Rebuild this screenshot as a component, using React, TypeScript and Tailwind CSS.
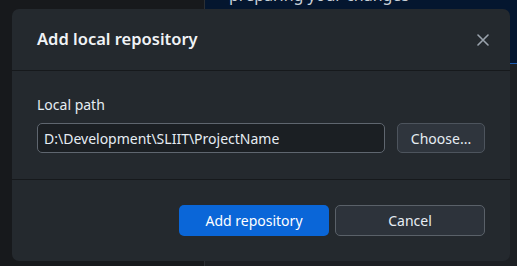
export default function App() {
  return (
    <div className="relative h-[266px] w-[517px] overflow-hidden bg-[#16181b] font-['Segoe_UI','Noto_Sans',sans-serif]">
      {/* app behind the modal */}
      <div className="flex h-full">
        <div className="w-[205px] border-r border-[#2b2f34] bg-[#17191c]" />
        <div className="flex flex-1 flex-col">
          <div className="h-[64px] overflow-hidden border-b border-[#1d5bb0] bg-[#04162f]">
            <p className="-mt-[17px] pl-[24px] text-[16px] leading-[24px] text-[#c9d1d9]">preparing your changes</p>
          </div>
          <div className="flex-1 bg-[#1c1f23]" />
        </div>
      </div>

      {/* dialog */}
      <div className="absolute left-[12px] top-[9px] flex h-[252px] w-[498px] flex-col rounded-[7px] bg-[#24292e] text-[#e6edf3]">
        <div className="flex h-[62px] items-center justify-between border-b border-[#16191c] pl-[25px] pr-[15px]">
          <h2 className="text-[16.5px] font-semibold text-[#f0f3f6]">Add local repository</h2>
          <button className="flex h-[24px] w-[24px] items-center justify-center text-[#9aa3ad]">
            <svg width="12" height="12" viewBox="0 0 12 12" fill="none" stroke="currentColor" strokeWidth="1.6" strokeLinecap="round">
              <path d="M1 1l10 10M11 1L1 11" />
            </svg>
          </button>
        </div>

        <div className="flex h-[109px] flex-col gap-[8px] border-b border-[#16191c] px-[25px] pt-[24px]">
          <label className="text-[14px] leading-[20px] text-[#e6edf3]">Local path</label>
          <div className="flex gap-[12px]">
            <div className="flex h-[30px] flex-1 items-center rounded-[5px] border border-[#5f666f] bg-[#1b1f23] px-[6px] text-[14px] text-[#e6edf3]">
              D:\Development\SLIIT\ProjectName
            </div>
            <button className="h-[30px] w-[88px] rounded-[5px] border border-[#4d545d] bg-[#2f353d] text-[14px] text-[#e6edf3]">
              Choose...
            </button>
          </div>
        </div>

        <div className="flex justify-end gap-[6px] px-[25px] pt-[25px]">
          <button className="h-[31px] w-[150px] rounded-[5px] bg-[#0a66d8] text-[14px] text-white">Add repository</button>
          <button className="h-[31px] w-[150px] rounded-[5px] border border-[#5a6169] bg-[#2d333b] text-[14px] text-[#e6edf3]">
            Cancel
          </button>
        </div>
      </div>
    </div>
  );
}
